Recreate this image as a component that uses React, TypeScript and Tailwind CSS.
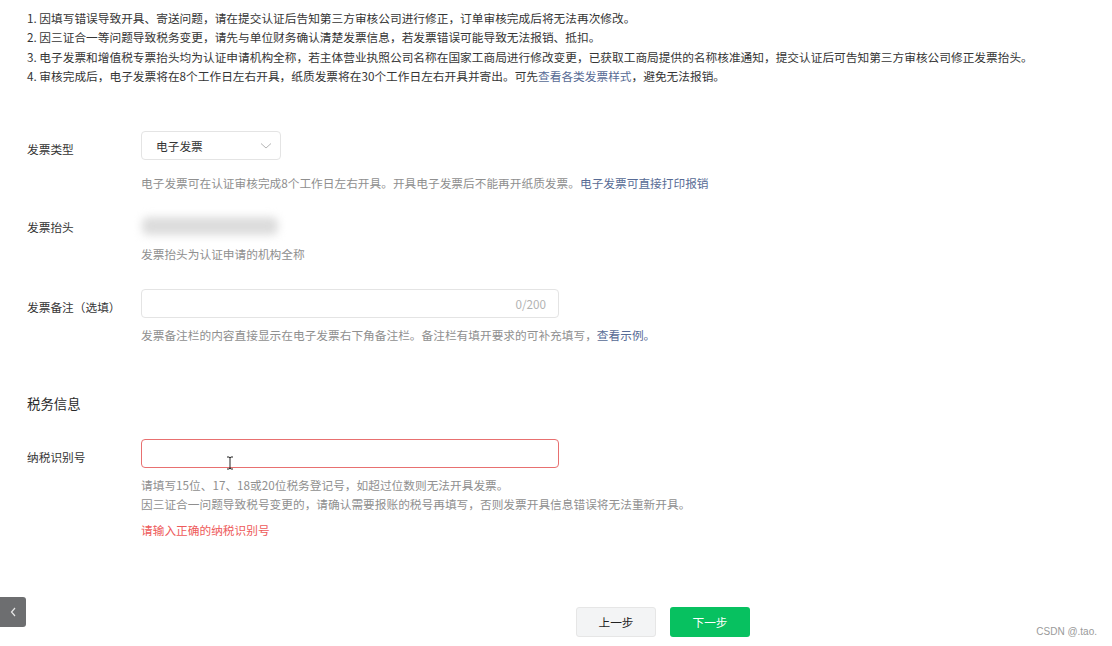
import React from "react";

const font = '"Noto Sans CJK SC", "Microsoft YaHei", sans-serif';

export default function App() {
  return (
    <div
      className="relative w-[1112px] h-[646px] bg-white overflow-hidden text-[#353535]"
      style={{ fontFamily: font }}
    >
      <div className="pl-[27px] pt-[8px]">
        <div className="text-[11.7px] leading-[19.3px]">
          <div>1. 因填写错误导致开具、寄送问题，请在提交认证后告知第三方审核公司进行修正，订单审核完成后将无法再次修改。</div>
          <div>2. 因三证合一等问题导致税务变更，请先与单位财务确认清楚发票信息，若发票错误可能导致无法报销、抵扣。</div>
          <div>3. 电子发票和增值税专票抬头均为认证申请机构全称，若主体营业执照公司名称在国家工商局进行修改变更，已获取工商局提供的名称核准通知，提交认证后可告知第三方审核公司修正发票抬头。</div>
          <div>
            4. 审核完成后，电子发票将在8个工作日左右开具，纸质发票将在30个工作日左右开具并寄出。可先
            <span className="text-[#576b95]">查看各类发票样式</span>，避免无法报销。
          </div>
        </div>

        {/* Row 1 */}
        <div className="mt-[46px] flex items-center">
          <div className="w-[114px] text-[11.7px] leading-[29px] translate-y-[2.5px]">发票类型</div>
          <div className="w-[140px] h-[29px] border border-[#e4e4e4] rounded-[4px] flex items-center justify-between pl-[14px] pr-[8px]">
            <span className="text-[11.7px]">电子发票</span>
            <svg width="12" height="8" viewBox="0 0 12 8" fill="none">
              <path d="M1 1.5 L6 6 L11 1.5" stroke="#b5b5b5" strokeWidth="1" />
            </svg>
          </div>
        </div>
        <div className="pl-[114px] mt-[12.5px] text-[11.7px] leading-[19px] text-[#8f8f8f]">
          电子发票可在认证审核完成8个工作日左右开具。开具电子发票后不能再开纸质发票。
          <span className="text-[#576b95]">电子发票可直接打印报销</span>
        </div>

        {/* Row 2 */}
        <div className="mt-[20.5px] flex items-center h-[28px]">
          <div className="w-[114px] text-[11.7px] leading-[19px]">发票抬头</div>
          <div className="w-[140px] h-[28px] flex items-center">
            <div className="w-[136px] h-[18px] ml-[1px] bg-[#dcdcdc] rounded-[6px] blur-[4px]" />
          </div>
        </div>
        <div className="pl-[114px] mt-[3.5px] text-[11.7px] leading-[19px] text-[#8f8f8f]">
          发票抬头为认证申请的机构全称
        </div>

        {/* Row 3 */}
        <div className="mt-[26.5px] flex items-center">
          <div className="w-[114px] text-[11.7px] leading-[29px] translate-y-[2.5px]">发票备注（选填）</div>
          <div className="w-[418px] h-[29px] border border-[#e4e4e4] rounded-[4px] flex items-center justify-end pr-[12px]">
            <span className="text-[11.7px] text-[#b2b2b2]">0/200</span>
          </div>
        </div>
        <div className="pl-[114px] mt-[6.5px] text-[11.7px] leading-[19px] text-[#8f8f8f]">
          发票备注栏的内容直接显示在电子发票右下角备注栏。备注栏有填开要求的可补充填写，
          <span className="text-[#576b95]">查看示例。</span>
        </div>

        {/* Section */}
        <div className="mt-[49.5px] text-[13.4px] leading-[20px] text-[#2a2a2a]">税务信息</div>

        {/* Row 4 */}
        <div className="mt-[26px] flex items-center">
          <div className="w-[114px] text-[11.7px] leading-[29px] translate-y-[2.5px]">纳税识别号</div>
          <div className="relative w-[418px] h-[29px] border border-[#e87070] rounded-[4px]">
            <svg
              className="absolute left-[84px] top-[16px]"
              width="8"
              height="14"
              viewBox="0 0 8 14"
              fill="none"
            >
              <path d="M1 1 H3 M5 1 H7 M4 1.5 V12.5 M1 13 H3 M5 13 H7 M3 1 L4 1.8 L5 1 M3 13 L4 12.2 L5 13" stroke="#222" strokeWidth="1" />
            </svg>
          </div>
        </div>
        <div className="pl-[114px] mt-[6.5px] text-[11.7px] leading-[19px] text-[#8f8f8f]">
          <div>请填写15位、17、18或20位税务登记号，如超过位数则无法开具发票。</div>
          <div>因三证合一问题导致税号变更的，请确认需要报账的税号再填写，否则发票开具信息错误将无法重新开具。</div>
        </div>
        <div className="pl-[114px] mt-[7px] text-[11.7px] leading-[19px] text-[#ee5a5a]">
          请输入正确的纳税识别号
        </div>

        {/* Buttons */}
        <div className="mt-[68.5px] flex gap-[14px] pl-[549px]">
          <button className="w-[80px] h-[30px] rounded-[3px] bg-[#f3f4f5] border border-[#e6e6e6] text-[11.7px] text-[#222]">
            上一步
          </button>
          <button className="w-[80px] h-[30px] rounded-[3px] bg-[#07c160] text-[11.7px] text-white">
            下一步
          </button>
        </div>
      </div>

      {/* Left floating tab */}
      <div className="absolute left-0 top-[597px] w-[26px] h-[30px] bg-[#6d6e70] rounded-r-[3px] flex items-center justify-center">
        <svg width="8" height="12" viewBox="0 0 8 12" fill="none">
          <path d="M6 2 L2.5 6 L6 10" stroke="#e8e8e8" strokeWidth="1.2" />
        </svg>
      </div>

      {/* Watermark */}
      <div
        className="absolute right-[15px] top-[625px] text-[10px] leading-[14px] text-[#9a9a9a]"
        style={{ fontFamily: '"Liberation Sans", Arial, sans-serif' }}
      >
        CSDN @.tao.
      </div>
    </div>
  );
}
